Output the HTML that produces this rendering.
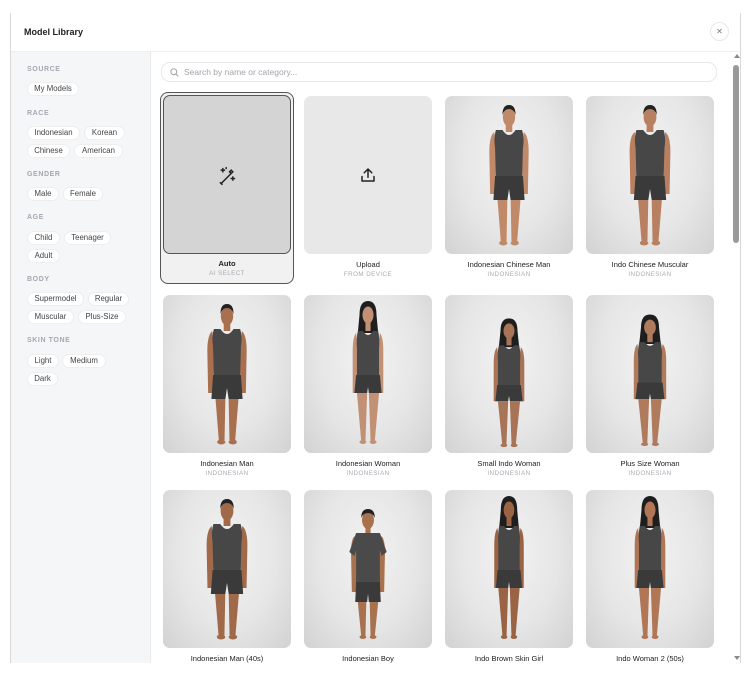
<!DOCTYPE html>
<html><head><meta charset="utf-8"><style>
*{box-sizing:border-box;margin:0;padding:0}
body{width:752px;height:674px;background:#fff;font-family:"Liberation Sans",sans-serif;position:relative;overflow:hidden}
.modal{position:absolute;left:10px;top:13px;width:731px;height:650px;border-left:1px solid #d8d8d8;border-right:1px solid #d8d8d8;background:#fff}
.hdr{height:39px;border-bottom:1px solid #eee;position:relative}
.hdr h1{position:absolute;left:13px;top:14px;font-size:9px;font-weight:bold;color:#222}
.close{position:absolute;left:699px;top:9px;width:19px;height:19px;border:1px solid #e8e8e8;border-radius:50%;text-align:center;line-height:17px;font-size:8px;color:#777}
.side{position:absolute;left:0;top:39px;width:140px;height:611px;background:#f5f6f7;border-right:1px solid #eaeaea}
.lab{position:absolute;left:16px;font-size:7px;font-weight:bold;color:#a3a8b0;letter-spacing:.6px}
.chip{position:absolute;height:14px;border-radius:7px;background:#fff;border:1px solid #eceef0;font-size:7.8px;color:#444;line-height:12px;text-align:center}
.search{position:absolute;left:150px;top:49px;width:556px;height:20px;border:1px solid #e6e8ea;border-radius:9px;font-size:8.5px;color:#a0a4aa;padding-left:22px;line-height:18px}
.search svg{position:absolute;left:8px;top:5px}
.card{position:absolute;width:128px}
.img{height:158px;border-radius:7px;background:radial-gradient(ellipse at 50% 40%,#f2f2f2 0%,#e6e6e6 55%,#d2d2d2 100%);overflow:hidden}
.nm{text-align:center;font-size:7.5px;color:#222;margin-top:6px}
.sb{text-align:center;font-size:6.3px;color:#a8acb2;letter-spacing:.4px;margin-top:2px}
.sbar{position:absolute;left:720px;top:39px;width:11px;height:611px}
</style></head><body>
<svg width="0" height="0" style="position:absolute">
<symbol id="m" viewBox="0 0 128 158">
<path d="M46 36 Q40 40 40 56 L41 98 L47 98 L49 58 Z" fill="currentColor"/>
<path d="M82 36 Q88 40 88 56 L87 98 L81 98 L79 58 Z" fill="currentColor"/>
<rect x="60" y="27" width="8" height="9" fill="currentColor"/>
<ellipse cx="64" cy="21" rx="7.5" ry="9.5" fill="currentColor"/>
<path d="M56 19 Q56 9 64 9 Q72 9 72 19 Q70 13 64 13 Q58 13 56 19Z" fill="#222"/>
<path d="M48 34 L56 34 Q64 44 72 34 L80 34 Q83 42 81 52 L80 82 L48 82 L47 52 Q45 42 48 34Z" fill="#474747"/>
<path d="M47 80 L81 80 L83 104 L66 104 L64 93 L62 104 L45 104 Z" fill="#3a3a3a"/>
<path d="M50 104 L62 104 L61 145 L54 145 Z M66 104 L78 104 L74 145 L67 145 Z" fill="currentColor"/>
<ellipse cx="57" cy="147" rx="5" ry="2.5" fill="currentColor"/><ellipse cx="71" cy="147" rx="5" ry="2.5" fill="currentColor"/>
</symbol>
<symbol id="f" viewBox="0 0 128 158">
<path d="M54 20 Q54 6 64 6 Q74 6 74 20 L76 38 L52 38 Z" fill="#1e1e1e"/>
<path d="M50 38 Q46 42 46 56 L46 98 L51 98 L53 58 Z" fill="currentColor"/>
<path d="M78 38 Q82 42 82 56 L82 98 L77 98 L75 58 Z" fill="currentColor"/>
<rect x="61" y="27" width="6" height="9" fill="currentColor"/>
<ellipse cx="64" cy="20" rx="6.5" ry="8.5" fill="currentColor"/>
<path d="M52 36 L58 36 Q64 44 70 36 L76 36 Q78 44 77 54 L77 82 L51 82 L51 54 Q50 44 52 36Z" fill="#474747"/>
<path d="M50 80 L78 80 L80 98 L65 98 L64 92 L63 98 L48 98 Z" fill="#3a3a3a"/>
<path d="M51 98 L63 98 L61 146 L56 146 Z M65 98 L77 98 L72 146 L67 146 Z" fill="currentColor"/>
<ellipse cx="58" cy="147" rx="4" ry="2" fill="currentColor"/><ellipse cx="70" cy="147" rx="4" ry="2" fill="currentColor"/>
</symbol>
<symbol id="b" viewBox="0 0 128 158">
<path d="M48 46 Q44 50 44 62 L45 102 L50 102 L52 64 Z" fill="currentColor"/>
<path d="M80 46 Q84 50 84 62 L83 102 L78 102 L76 64 Z" fill="currentColor"/>
<rect x="61" y="36" width="6" height="9" fill="currentColor"/>
<ellipse cx="64" cy="30" rx="7" ry="9" fill="currentColor"/>
<path d="M56 28 Q56 19 64 19 Q72 19 72 28 Q70 23 64 23 Q58 23 56 28Z" fill="#222"/>
<path d="M50 43 L78 43 L86 62 L80 66 L78 60 L78 94 L50 94 L50 60 L48 66 L42 62 Z" fill="#4a4a4a"/>
<path d="M50 92 L78 92 L79 112 L65 112 L64 104 L63 112 L49 112 Z" fill="#3a3a3a"/>
<path d="M52 112 L62 112 L61 146 L56 146 Z M66 112 L76 112 L72 146 L67 146 Z" fill="currentColor"/>
<ellipse cx="58" cy="147" rx="4" ry="2" fill="currentColor"/><ellipse cx="70" cy="147" rx="4" ry="2" fill="currentColor"/>
</symbol>
</svg>
<div class="modal">
<div class="hdr"><h1>Model Library</h1><div class="close">✕</div></div>
<div class="side">
<div class="lab" style="top:14px">SOURCE</div>
<div class="chip" style="left:16px;top:30px;width:52px">My Models</div>
<div class="lab" style="top:58px">RACE</div>
<div class="chip" style="left:16px;top:74px;width:53px">Indonesian</div>
<div class="chip" style="left:73px;top:74px;width:41px">Korean</div>
<div class="chip" style="left:16px;top:92px;width:43px">Chinese</div>
<div class="chip" style="left:63px;top:92px;width:49px">American</div>
<div class="lab" style="top:119px">GENDER</div>
<div class="chip" style="left:16px;top:135px;width:32px">Male</div>
<div class="chip" style="left:52px;top:135px;width:40px">Female</div>
<div class="lab" style="top:162px">AGE</div>
<div class="chip" style="left:16px;top:179px;width:33px">Child</div>
<div class="chip" style="left:53px;top:179px;width:47px">Teenager</div>
<div class="chip" style="left:16px;top:197px;width:33px">Adult</div>
<div class="lab" style="top:224px">BODY</div>
<div class="chip" style="left:16px;top:240px;width:57px">Supermodel</div>
<div class="chip" style="left:77px;top:240px;width:41px">Regular</div>
<div class="chip" style="left:16px;top:258px;width:47px">Muscular</div>
<div class="chip" style="left:67px;top:258px;width:48px">Plus-Size</div>
<div class="lab" style="top:285px">SKIN TONE</div>
<div class="chip" style="left:16px;top:302px;width:32px">Light</div>
<div class="chip" style="left:51px;top:302px;width:44px">Medium</div>
<div class="chip" style="left:16px;top:320px;width:31px">Dark</div>
</div>
<div class="search"><svg width="9" height="9" viewBox="0 0 10 10"><circle cx="4.2" cy="4.2" r="3.3" fill="none" stroke="#999" stroke-width="1"/><path d="M6.7 6.7 L9.3 9.3" stroke="#999" stroke-width="1"/></svg>Search by name or category...</div>
<div class="sbar"><div style="position:absolute;left:3px;top:2px;border:3px solid transparent;border-bottom:4px solid #888;border-top:0"></div><div style="position:absolute;left:2px;top:13px;width:6px;height:178px;border-radius:3px;background:#999"></div><div style="position:absolute;left:3px;bottom:3px;border:3px solid transparent;border-top:4px solid #888;border-bottom:0"></div></div>
</div>

<div style="position:absolute;left:160px;top:92px;width:134px;height:192px;border:1.5px solid #555;border-radius:8px;background:#f1f1f1"></div>
<div class="card" style="left:163px;top:95px"><div class="img" style="background:#d4d4d4;border:1px solid #555;height:159px;position:relative"><svg style="position:absolute;left:53px;top:70px" width="20" height="20" viewBox="0 0 24 24" fill="none" stroke="#222" stroke-width="1.8" stroke-linecap="round"><path d="M5 21 L17 9 M15 7 L17 5 L19 7 L17 9 Z M4 20 L6 22"/><path d="M7 3 v4 M5 5 h4 M19 13 v4 M17 15 h4 M11 2 v1"/></svg></div><div class="nm" style="font-weight:bold;margin-top:5px">Auto</div><div class="sb">AI SELECT</div></div>
<div class="card" style="left:304px;top:96px"><div class="img" style="background:#e8e8e8;position:relative"><svg style="position:absolute;left:55px;top:70px" width="18" height="18" viewBox="0 0 24 24" fill="none" stroke="#222" stroke-width="2" stroke-linecap="round" stroke-linejoin="round"><path d="M12 15 V4 M7 9 L12 4 L17 9 M4 14 V20 H20 V14"/></svg></div><div class="nm">Upload</div><div class="sb">FROM DEVICE</div></div>
<div class="card" style="left:445px;top:96px"><div class="img"><svg width="128" height="158" style="color:#c08a68"><use href="#m" transform="translate(64,0) scale(0.82,1) translate(-64,0)"/></svg></div><div class="nm">Indonesian Chinese Man</div><div class="sb">INDONESIAN</div></div>
<div class="card" style="left:586px;top:96px"><div class="img"><svg width="128" height="158" style="color:#b88060"><use href="#m" transform="translate(64,0) scale(0.85,1) translate(-64,0)"/></svg></div><div class="nm">Indo Chinese Muscular</div><div class="sb">INDONESIAN</div></div>

<div class="card" style="left:163px;top:295px"><div class="img"><svg width="128" height="158" style="color:#a8704e"><use href="#m" transform="translate(64,0) scale(0.82,1) translate(-64,0)"/></svg></div><div class="nm">Indonesian Man</div><div class="sb">INDONESIAN</div></div>
<div class="card" style="left:304px;top:295px"><div class="img"><svg width="128" height="158" style="color:#c29074"><use href="#f" transform="translate(64,0) scale(0.85,1) translate(-64,0)"/></svg></div><div class="nm">Indonesian Woman</div><div class="sb">INDONESIAN</div></div>
<div class="card" style="left:445px;top:295px"><div class="img"><svg width="128" height="158" style="color:#a87458"><use href="#f" transform="translate(64,18) scale(0.85,0.9) translate(-64,0)"/></svg></div><div class="nm">Small Indo Woman</div><div class="sb">INDONESIAN</div></div>
<div class="card" style="left:586px;top:295px"><div class="img"><svg width="128" height="158" style="color:#b07a5c"><use href="#f" transform="translate(64,14) scale(0.9,0.92) translate(-64,0)"/></svg></div><div class="nm">Plus Size Woman</div><div class="sb">INDONESIAN</div></div>

<div class="card" style="left:163px;top:490px"><div class="img"><svg width="128" height="158" style="color:#a06a4a"><use href="#m" transform="translate(64,0) scale(0.85,1) translate(-64,0)"/></svg></div><div class="nm">Indonesian Man (40s)</div></div>
<div class="card" style="left:304px;top:490px"><div class="img"><svg width="128" height="158" style="color:#a8724f"><use href="#b" transform="translate(64,0) scale(0.85,1) translate(-64,0)"/></svg></div><div class="nm">Indonesian Boy</div></div>
<div class="card" style="left:445px;top:490px"><div class="img"><svg width="128" height="158" style="color:#9a6444"><use href="#f" transform="translate(64,0) scale(0.82,1) translate(-64,0)"/></svg></div><div class="nm">Indo Brown Skin Girl</div></div>
<div class="card" style="left:586px;top:490px"><div class="img"><svg width="128" height="158" style="color:#b07656"><use href="#f" transform="translate(64,0) scale(0.85,1) translate(-64,0)"/></svg></div><div class="nm">Indo Woman 2 (50s)</div></div>
</body></html>
